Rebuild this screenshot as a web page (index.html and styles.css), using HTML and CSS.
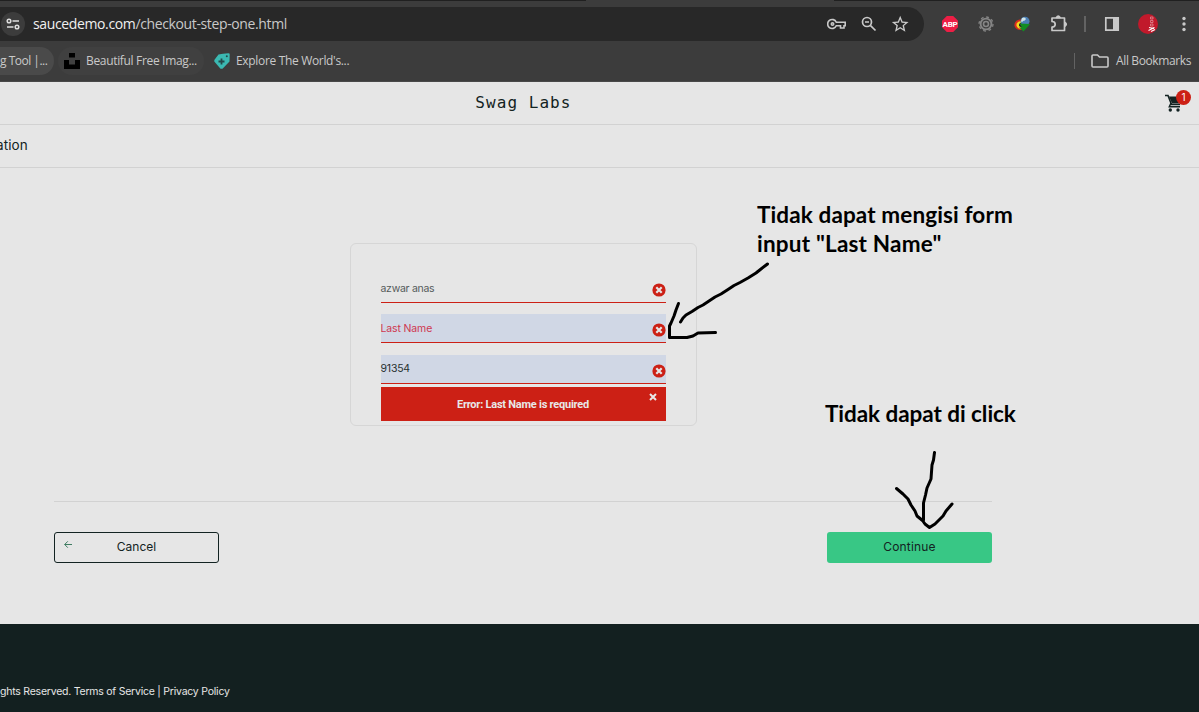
FILE: index.html
```
<!DOCTYPE html>
<html lang="en">
<head>
<meta charset="utf-8">
<title>Swag Labs</title>
<link rel="stylesheet" href="styles.css">
</head>
<body>
<div class="screen">
  <div class="browser">
    <div class="tabstrip"><span class="tabs-left"></span><span class="tabs-right"></span></div>
    <div class="toolbar">
      <div class="omnibox">
        <span class="site-info"><svg width="14" height="14" viewBox="0 0 14 14" fill="none" stroke="#dedede" stroke-width="1.5"><circle cx="3" cy="4" r="1.8"/><path d="M6.5 4H13M1 10H7.5"/><circle cx="11" cy="10" r="1.8"/></svg></span>
        <span class="url"><span class="host">saucedemo.com</span>/checkout-step-one.html</span>
        <div class="omni-icons">
          <svg width="20" height="14" viewBox="0 0 20 14" fill="none" stroke="#c9c9c9" stroke-width="1.6"><path d="M9.300 5.200H18.200V8.800H17V11H13.500V8.800H9.300A4.500 4.500 0 1 1 9.300 5.200Z"/><circle cx="5.500" cy="7" r="1.200"/></svg>
          <svg width="16" height="16" viewBox="0 0 16 16" fill="none" stroke="#c9c9c9" stroke-width="1.7"><circle cx="6" cy="6" r="4.500"/><path d="M9.300 9.300L14.500 14.500M4 6H8"/></svg>
          <svg width="18" height="18" viewBox="1 1 21.500 21.500" fill="#c9c9c9"><path d="M22 9.240l-7.190-.62L12 2 9.190 8.630 2 9.240l5.460 4.730L5.820 21 12 17.270 18.180 21l-1.630-7.030L22 9.240zM12 15.400l-3.760 2.270 1-4.280-3.320-2.880 4.380-.38L12 6.100l1.710 4.040 4.380.38-3.320 2.880 1 4.280L12 15.400z"/></svg>
        </div>
      </div>
      <div class="extensions">
        <span class="abp">ABP</span>
        <svg class="gear" width="16" height="16" viewBox="0 0 16 16" fill="none" stroke="#858585"><circle cx="8" cy="8" r="5.400" stroke-width="1.900"/><circle cx="8" cy="8" r="2.500" stroke-width="1.600"/><circle cx="8" cy="8" r="7" stroke-width="1.300" stroke-dasharray="2.750 2.750"/></svg>
        <svg class="idm" width="16" height="16" viewBox="0 0 16 16"><path d="M8 3.500C3 3 0 6 .5 9.500S4 14 8 14Z" fill="#d92b20"/><path d="M9 5C4.500 4.500 2 7 2.500 9.500S5 13 8 13Z" fill="#f2d81f"/><path d="M9 6.500C6 6.500 4.500 8 5 10L8 12Z" fill="#222"/><circle cx="11" cy="5.300" r="4.500" fill="#4b7fb5"/><path d="M8 2q3-1.500 4 1q-1 2-3 2q-1 2-2 0Z" fill="#d0e3e6"/><path d="M5.500 7.500L16 8 14 10.500 9.500 15.500 5 11.500H8Z" fill="#128c22"/></svg>
        <svg class="puzzle" width="18" height="18" viewBox="0 0 18 18" fill="none" stroke="#c9c9c9" stroke-width="1.700" stroke-linejoin="round"><path d="M2 3H14.500V15.500H2V12Q5.200 12 5.200 9.200Q5.200 6.500 2 6.500Z"/><path d="M6.500 2.500Q8.200-.2 10 2.500ZM15 7.500Q17.500 9.200 15 11Z" fill="#c9c9c9"/></svg>
        <span class="divider"></span>
        <svg class="panel" width="16" height="16" viewBox="0 0 16 16"><path d="M1.800 1.800H14.200V14.200H1.800Z" fill="none" stroke="#c9c9c9" stroke-width="1.700"/><path d="M9 1.500H14.500V14.500H9Z" fill="#c9c9c9"/></svg>
        <svg class="avatar" width="20" height="20" viewBox="0 0 20 20"><circle cx="10" cy="10" r="10" fill="#c1192b"/><path d="M12.500 3h2.500v2h-2.500zM12.500 6.500h2.500v2h-2.500zM12.500 10h2.500v2h-2.500z" fill="none" stroke="#e79aa0" stroke-width=".7"/><path d="M11 13.500l5 1M10.500 16.500l6-3M13 17.500l4-2" stroke="#fff" stroke-width="1.200"/></svg>
        <svg class="menu" width="4" height="16" viewBox="0 0 4 16" fill="#c9c9c9"><circle cx="2" cy="2.500" r="1.700"/><circle cx="2" cy="8" r="1.700"/><circle cx="2" cy="13.500" r="1.700"/></svg>
      </div>
    </div>
    <div class="bookmarks">
      <span class="chip chip-first"><span class="bm-tool">g Tool |...</span></span>
      <span class="chip chip-second"><svg width="16" height="16" viewBox="0 0 16 16"><path d="M5 0H11V4.500H5ZM0 7H5V11.500H11V7H16V16H0Z"/></svg><span class="bm-free">Beautiful Free Imag...</span></span>
      <span class="bookmark"><svg width="16" height="16" viewBox="0 0 16 16"><path d="M9 .8L14.500.3Q15.800.3 15.700 1.500L15.500 8.500 8.500 15.700 6.500 15.700 .3 8.500V7L4.500 1.500Z" fill="#3bb9b2"/><path d="M7.500 5.500V11.500M4.500 8.500H10.500" stroke="#24494a" stroke-width="1.800"/><circle cx="12.800" cy="3.200" r="1" fill="#24494a"/></svg><span class="bm-world">Explore The World's...</span></span>
      <span class="all"><span class="divider"></span><svg width="18" height="14" viewBox="0 0 18 14" fill="none" stroke="#c9c9c9" stroke-width="1.600"><path d="M1 2Q1 1 2 1H6.500L8.500 3H16Q17 3 17 4V12Q17 13 16 13H2Q1 13 1 12Z"/></svg><span class="bm-all">All Bookmarks</span></span>
    </div>
  </div>

  <header class="header">
    <span class="logo">Swag Labs</span>
    <div class="cart">
      <svg width="18" height="18" viewBox="0 0 18 18" fill="none" stroke="#132322"><path d="M0 1.500H3L6.500 10.500H15" stroke-width="1.600"/><path d="M4 2.500H16L14.500 9.500H7Z" fill="#132322" stroke="none"/><path d="M6 9L4.300 12.800H15" stroke-width="1.500"/><circle cx="5.300" cy="16" r="1.700" fill="#132322" stroke="none"/><circle cx="13" cy="16" r="1.700" fill="#132322" stroke="none"/></svg>
      <span class="badge">1</span>
    </div>
  </header>
  <div class="subheader"><span class="title">ation</span></div>

  <main class="main">
    <form class="card">
      <div class="field"><span class="value first">azwar anas</span><svg class="err" viewBox="0 0 14 14"><circle cx="7" cy="7" r="6.600"/><path d="M4.300 4.300L9.700 9.700M9.700 4.300L4.300 9.700"/></svg></div>
      <div class="field filled"><span class="value placeholder">Last Name</span><svg class="err" viewBox="0 0 14 14"><circle cx="7" cy="7" r="6.600"/><path d="M4.300 4.300L9.700 9.700M9.700 4.300L4.300 9.700"/></svg></div>
      <div class="field filled zip"><span class="value code">91354</span><svg class="err" viewBox="0 0 14 14"><circle cx="7" cy="7" r="6.600"/><path d="M4.300 4.300L9.700 9.700M9.700 4.300L4.300 9.700"/></svg></div>
      <div class="error"><span class="error-text">Error: Last Name is required</span><svg class="close" width="8" height="8" viewBox="0 0 8 8" stroke="#e8e8e8" stroke-width="2"><path d="M1 1L7 7M7 1L1 7"/></svg></div>
    </form>
    <div class="actions">
      <div class="btn cancel"><svg class="back" width="8" height="8" viewBox="0 0 8 8" fill="none" stroke="#3f7c62" stroke-width="1"><path d="M8 3.500H.7M3.800 .3L.7 3.500L3.800 6.700"/></svg><span class="cancel-text">Cancel</span></div>
      <div class="btn continue"><span class="continue-text">Continue</span></div>
    </div>
  </main>
  <footer class="footer"><span class="copy">ghts Reserved. Terms of Service | Privacy Policy</span></footer>

  <div class="note note-form"><span class="n1">Tidak dapat mengisi form</span><br><span class="n2">input "Last Name"</span></div>
  <div class="note note-click"><span class="n3">Tidak dapat di click</span></div>
  <svg class="ink" width="1199" height="712" viewBox="0 0 1199 712" fill="none" stroke="#000" stroke-width="3" stroke-linecap="round" stroke-linejoin="round">
    <path d="M767.500 264L761 269 756 273 748 278 740 282.500 734 285.500 728 289.500 721 294 715 297 709 301 703 305 698 307.500 692 311.500 686 315 683 318 680.500 322"/>
    <path d="M678.500 303.500L676 310 674 316 671 323 669.500 326V337.500H687L693 336 698 333 715.500 332.500"/>
    <path d="M934.500 452.500L933.500 460 932 465 931 479 927 488 925.500 495 923.500 503V520"/>
    <path d="M896.500 488.500L903 494 908 499 911 505 915 511 917 516 922.500 520.500 925 524 929.500 527.500 935 524 943 516 946 511 952 504"/>
  </svg>
</div>
</body>
</html>
```
FILE: styles.css
```
* { box-sizing: border-box; }
body { margin: 0; font-family: Inter, sans-serif; }
svg { display: block; flex: none; }
.screen { position: relative; width: 1199px; height: 712px; overflow: hidden; background: #e6e6e6; display: flex; flex-direction: column; color: #132322; white-space: nowrap; }

.browser { height: 82px; background: #3c3c3c; border-bottom: 1px solid #494949; font-family: "Open Sans", sans-serif; color: #c9c9c9; }
.tabstrip { height: 1px; display: flex; justify-content: space-between; }
.tabs-left { width: 586px; background: #202020; }
.tabs-right { width: 365px; background: #202020; }
.toolbar { height: 46px; display: flex; align-items: center; }
.omnibox { width: 924px; height: 34px; border-radius: 0 17px 17px 0; background: #282828; display: flex; align-items: center; }
.site-info { width: 24px; height: 24px; margin-left: 1px; border-radius: 50%; background: #3c3c3c; display: flex; align-items: center; justify-content: center; }
.url { margin-left: 8px; font-size: 14px; line-height: 18px; letter-spacing: -.37px; }
.host { color: #f0f0f0; }
.omni-icons { margin-left: auto; padding-right: 15px; display: flex; align-items: center; gap: 14px; }
.extensions { flex: 1; display: flex; align-items: center; }
.abp { width: 16px; height: 16px; margin-left: 18px; background: #ed1e45; clip-path: polygon(30% 0, 70% 0, 100% 30%, 100% 70%, 70% 100%, 30% 100%, 0 70%, 0 30%); color: #fff; font: bold 8px/17px Roboto, sans-serif; letter-spacing: -.2px; text-align: center; }
.gear { margin-left: 20px; }
.idm { margin-left: 20px; }
.puzzle { margin-left: 20px; }
.divider { width: 1.500px; height: 16px; background: #636363; }
.extensions .divider { margin-left: 16px; }
.panel { margin-left: 18px; }
.avatar { margin-left: 18px; }
.menu { margin-left: 24px; }
.bookmarks { height: 28px; display: flex; align-items: center; font-size: 12px; line-height: 16px; }
.bookmarks span span { padding-bottom: 1px; }
.chip { height: 28px; display: flex; align-items: center; }
.chip-first { width: 54px; border-radius: 0 14px 14px 0; background: #4a4a4a; }
.chip-second { width: 146px; margin-left: 4px; padding-left: 6px; border-radius: 14px; background: #404040; gap: 6px; }
.bookmark { margin-left: 10px; display: flex; align-items: center; gap: 6px; }
.bm-tool { letter-spacing: -.5px; }
.bm-free { letter-spacing: -.33px; }
.bm-world { letter-spacing: -.33px; }
.bm-all { letter-spacing: -.39px; }
.all { margin-left: auto; padding-right: 8px; display: flex; align-items: center; }
.all svg { margin: 0 7px 0 16px; }

.header { height: 43px; border-bottom: 1px solid #d2d2d2; display: flex; align-items: center; justify-content: flex-end; }
.logo { margin-right: 593.500px; padding-bottom: 1px; font-family: "DejaVu Sans Mono", monospace; font-size: 16px; letter-spacing: 1.050px; }
.cart { position: relative; width: 34px; height: 18px; }
.badge { position: absolute; left: 11px; top: -4px; width: 15px; height: 15px; border-radius: 50%; background: #cc2015; color: #fff; font-size: 10px; line-height: 15px; text-align: center; }
.subheader { height: 43px; padding-bottom: 1px; border-bottom: 1px solid #d2d2d2; display: flex; align-items: center; }
.title { margin-left: -4px; font-size: 13.500px; line-height: 17px; letter-spacing: .100px; }

.main { height: 456px; padding: 75px 207px 0 54px; }
.card { width: 347px; height: 183px; margin: 0 auto; padding: 30px 30px 0; border: 1px solid #d6d6d6; border-radius: 6px; }
.field { height: 29px; border-bottom: 1px solid #cc2015; display: flex; align-items: center; justify-content: space-between; font-size: 10.500px; }
.filled { margin-top: 11px; background: #d0d7e5; }
.zip { margin-top: 12px; }
.value { color: #555b5b; letter-spacing: -.28px; }
.value.placeholder { color: #cf3650; letter-spacing: -.14px; }
.value.code { padding-bottom: 2px; color: #27302f; letter-spacing: -.200px; }
.err { width: 14px; height: 14px; margin: 3px 0 0; }
.err circle { fill: #cc2015; }
.err path { stroke: #e6e6e6; stroke-width: 2.200; }
.error { position: relative; height: 34px; margin-top: 3px; background: #cc2015; color: #e8e8e8; display: flex; align-items: center; justify-content: center; font: bold 11px Roboto, sans-serif; letter-spacing: -.23px; }
.close { position: absolute; right: 8.500px; top: 6px; }
.actions { margin-top: 75px; padding-top: 30px; border-top: 1px solid #d2d2d2; display: flex; justify-content: space-between; }
.btn { position: relative; width: 165px; height: 31px; padding-bottom: 2px; border-radius: 3px; display: flex; align-items: center; justify-content: center; font-size: 12px; }
.cancel { border: 1px solid #132322; }
.continue-text { letter-spacing: .150px; }
.back { position: absolute; left: 9px; top: 8px; }
.continue { background: #38c785; }
.footer { flex: 1; padding-top: 61px; background: #132020; color: #e6e6e6; font-size: 10.500px; line-height: 14px; letter-spacing: -.230px; }

.note { position: absolute; color: #000; font: bold 22.500px/29px Lato, sans-serif; }
.note-form { left: 757px; top: 200px; }
.note-click { left: 825px; top: 399px; }
.n1 { letter-spacing: .120px; }
.n2 { letter-spacing: .200px; }
.n3 { letter-spacing: -.050px; }
.ink { position: absolute; left: 0; top: 0; }
```
